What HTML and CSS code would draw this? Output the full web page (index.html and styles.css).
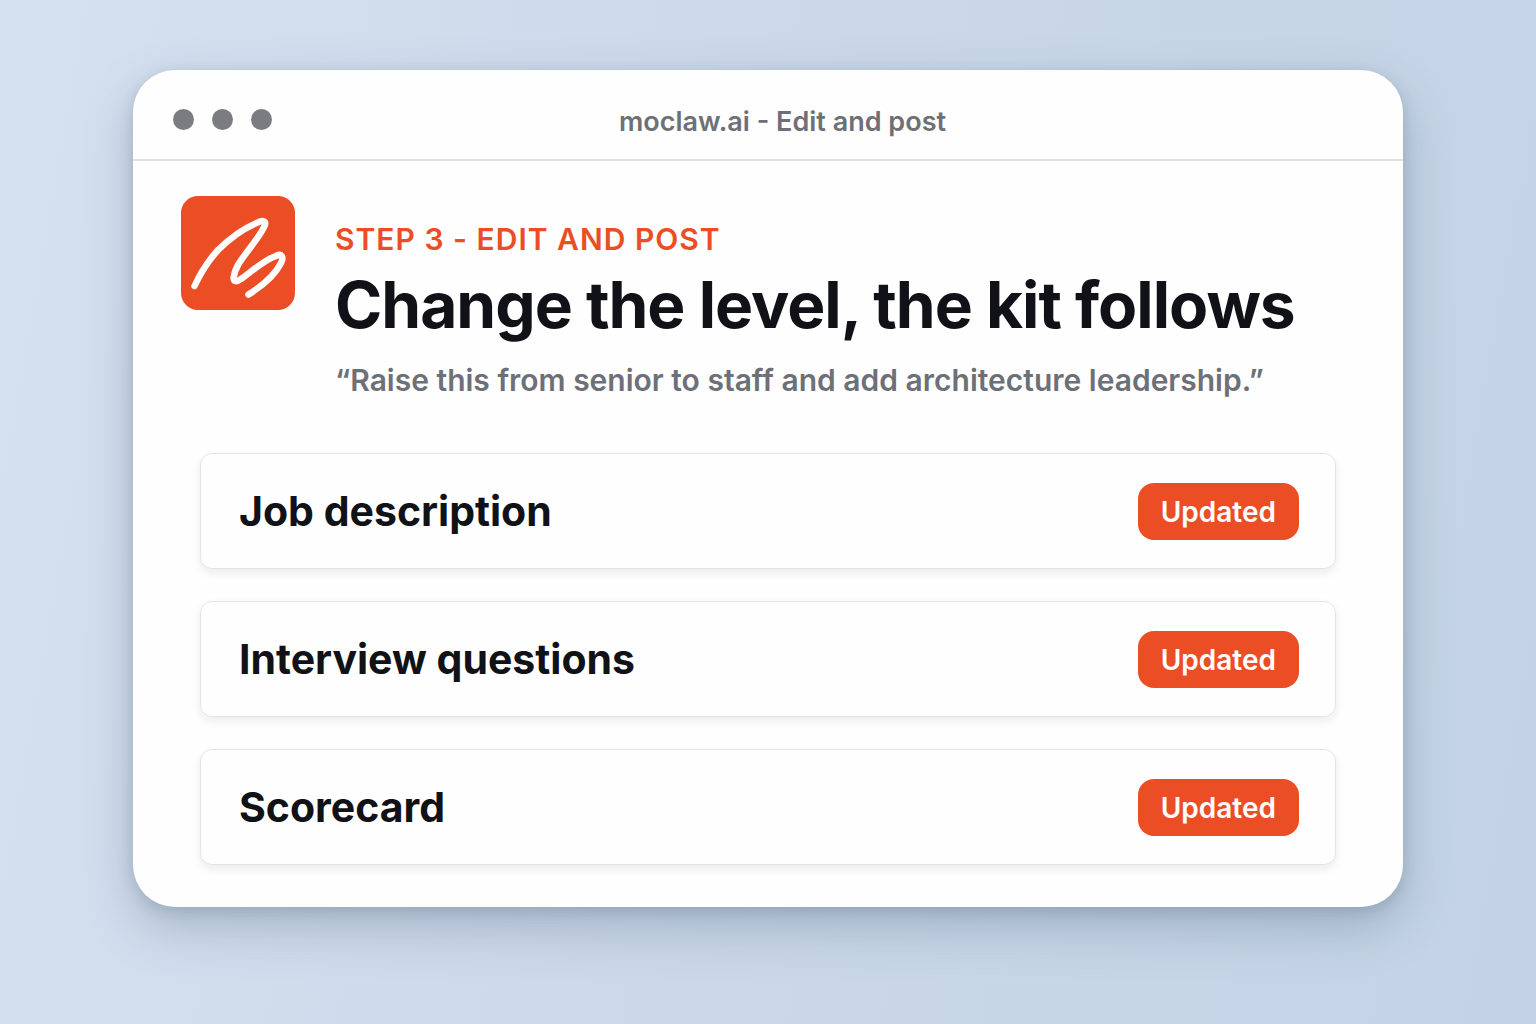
FILE: index.html
```
<!DOCTYPE html>
<html lang="en">
<head>
<meta charset="UTF-8">
<meta name="viewport" content="width=device-width, initial-scale=1.0">
<title>moclaw.ai - Edit and post</title>
<link rel="stylesheet" href="styles.css">
</head>
<body>

<div class="window">
  <!-- Title bar -->
  <header class="titlebar">
    <div class="dots">
      <span class="dot"></span>
      <span class="dot"></span>
      <span class="dot"></span>
    </div>
    <div class="titlebar-text">moclaw.ai - Edit and post</div>
  </header>

  <main class="content">
    <div class="intro">
      <svg class="logo" viewBox="0 0 114 114" aria-hidden="true">
        <rect width="114" height="114" rx="17" fill="#eb4d24"/>
        <path d="M13.500 90C20 76 28 64 37 54C50 41 65 31 79 25.500C83 24 85.500 26 83.500 30C79 41 64 57 57 69C54 74 53 78 52.500 82C53 86 56 86 60 83C70 76 83 64 95 60C101 57 103 61 100 67C94 79 81 90 67.500 98.500" fill="none" stroke="#fff" stroke-width="6.500" stroke-linecap="round" stroke-linejoin="round"/>
      </svg>
      <div class="intro-text">
        <p class="step">STEP 3 - EDIT AND POST</p>
        <h1>Change the level, the kit follows</h1>
        <p class="prompt">“Raise this from senior to staff and add architecture leadership.”</p>
      </div>
    </div>

    <!-- Kit documents -->
    <ul class="kit-list">
      <li>
        <h2>Job description</h2>
        <span class="badge">Updated</span>
      </li>
      <li>
        <h2>Interview questions</h2>
        <span class="badge">Updated</span>
      </li>
      <li>
        <h2>Scorecard</h2>
        <span class="badge">Updated</span>
      </li>
    </ul>
  </main>
</div>

</body>
</html>
```
FILE: styles.css
```
* {
  box-sizing: border-box;
}
body {
  margin: 0;
  min-height: 100vh;
  padding: 70px 133px;
  background: linear-gradient(100deg, #d5e1f0 0%, #cad8e9 50%, #c3d3e5 100%);
  font-family: Inter, "Liberation Sans", sans-serif;
  color: #111217;
}
h1, h2, p, ul {
  margin: 0;
  padding: 0;
}
.window {
  background: #fefefe;
  border-radius: 42px;
  box-shadow: 0 20px 50px rgba(70, 88, 115, 0.3), 0 4px 14px rgba(70, 88, 115, 0.2);
}
.titlebar {
  display: flex;
  align-items: center;
  height: 91px;
  padding: 10px 110px 0 40px;
  border-bottom: 2px solid #e0e1e3;
}
.dots {
  display: flex;
  gap: 18px;
}
.dot {
  width: 21px;
  height: 21px;
  border-radius: 50%;
  background: #7b7c81;
}
.titlebar-text {
  flex: 1;
  padding-top: 4px;
  text-align: center;
  font-size: 27px;
  line-height: 32px;
  font-weight: 600;
  color: #6e7077;
}
.content {
  padding: 35px 48px 42px;
}
.intro {
  display: flex;
  gap: 40px;
}
.logo {
  flex: none;
  width: 114px;
  height: 114px;
}
.intro-text {
  padding-top: 24px;
}
.step {
  font-size: 30px;
  line-height: 38px;
  font-weight: 600;
  letter-spacing: 1px;
  color: #eb4d24;
}
h1 {
  font-size: 64px;
  line-height: 94px;
  font-weight: 700;
  letter-spacing: -1px;
}
.prompt {
  font-size: 30px;
  line-height: 56px;
  font-weight: 600;
  color: #6e7077;
}
.kit-list {
  display: flex;
  flex-direction: column;
  gap: 32px;
  margin: 45px 19px 0;
  list-style: none;
}
.kit-list li {
  display: flex;
  align-items: center;
  justify-content: space-between;
  height: 116px;
  padding: 0 36px 0 38px;
  border: 1px solid #e3e4e7;
  border-radius: 12px;
  box-shadow: 0 4px 10px rgba(20, 22, 35, 0.08);
}
h2 {
  font-size: 41px;
  line-height: 50px;
  font-weight: 700;
}
.badge {
  padding: 11px 23px 9px;
  border-radius: 16px;
  background: #eb4d24;
  color: #fff;
  font-size: 28px;
  line-height: 37px;
  font-weight: 600;
}
```
